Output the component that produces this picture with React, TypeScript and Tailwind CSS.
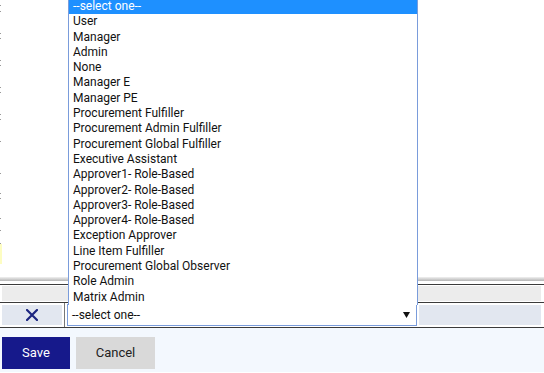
const roles = [
  'User',
  'Manager',
  'Admin',
  'None',
  'Manager E',
  'Manager PE',
  'Procurement Fulfiller',
  'Procurement Admin Fulfiller',
  'Procurement Global Fulfiller',
  'Executive Assistant',
  'Approver1- Role-Based',
  'Approver2- Role-Based',
  'Approver3- Role-Based',
  'Approver4- Role-Based',
  'Exception Approver',
  'Line Item Fulfiller',
  'Procurement Global Observer',
  'Role Admin',
  'Matrix Admin',
];

// leftovers of the rows behind the popup, at the very left edge
const edgeDots = [5, 11, 33, 38, 60, 65, 87, 92, 114, 119, 141, 173, 193, 198, 218, 230, 243];

function EdgeMarks() {
  return (
    <svg width="3" height="277" className="shrink-0">
      {edgeDots.map((y) => (
        <rect key={y} x="0" y={y} width="1" height="1" fill="#9a9a9a" />
      ))}
      <rect x="0" y="244" width="2" height="20" fill="#fdfdc2" />
    </svg>
  );
}

function RemoveIcon() {
  return (
    <svg width="12" height="12" viewBox="0 0 12 12">
      <path d="M1 1 L11 11 M11 1 L1 11" stroke="#1c2580" strokeWidth="2.2" strokeLinecap="square" />
    </svg>
  );
}

export default function App() {
  return (
    <div
      className="relative w-[544px] h-[373px] overflow-hidden bg-white text-[#111]"
      style={{ fontFamily: 'Roboto, "Liberation Sans", sans-serif' }}
    >
      <div className="flex h-[277px]">
        <EdgeMarks />
      </div>
      <div className="h-[4px] bg-gradient-to-b from-[#f1f1f1] to-[#b4b4b4]" />
      <div className="h-[3px]" />

      {/* table rows */}
      <div className="border-t border-[#3b3b3b]">
        <div className="h-[17px] pt-[1px] pb-[1px] pl-[2px] pr-[3px]">
          <div className="h-full bg-[#ececec]" />
        </div>
      </div>
      <div className="flex h-[26px] border-y border-[#3b3b3b]">
        <div className="w-[65px] shrink-0 py-[2px] pl-[2px] pr-[2px] border-r border-[#777]">
          <div className="h-full bg-[#e2e7f0] flex items-center justify-center">
            <RemoveIcon />
          </div>
        </div>
        <div className="pl-[2px] pt-[1px]">
          <div className="w-[350px] h-[22px] border border-[#7a9cdb] bg-white flex items-center justify-between pl-[4px] pr-[6px] text-[12px]">
            <span>--select one--</span>
            <svg width="7" height="6" viewBox="0 0 7 6">
              <path d="M0 0 H7 L3.5 6 Z" fill="#111" />
            </svg>
          </div>
        </div>
        <div className="flex-1 py-[2px] pl-[2px] pr-[3px]">
          <div className="h-full bg-[#e2e7f0]" />
        </div>
      </div>

      <div className="h-[44px] bg-[#f3f8fe] pt-[9px] pl-[2px] flex gap-[6px]">
        <button className="w-[68px] h-[32px] bg-[#16198b] text-white text-[13px]">Save</button>
        <button className="w-[79px] h-[32px] bg-[#d9d9d9] text-[#222] text-[13px]">Cancel</button>
      </div>

      {/* open native dropdown popup */}
      <ul className="absolute left-[68px] top-[-2px] w-[350px] border-x border-t border-[#7a9cdb] bg-white text-[12px]">
        <li className="h-[15.3px] leading-[15.3px] pl-[4px] bg-[#1e90ff] text-white">--select one--</li>
        {roles.map((r) => (
          <li key={r} className="h-[15.3px] leading-[15.3px] pl-[4px] whitespace-nowrap">
            {r}
          </li>
        ))}
      </ul>
    </div>
  );
}
